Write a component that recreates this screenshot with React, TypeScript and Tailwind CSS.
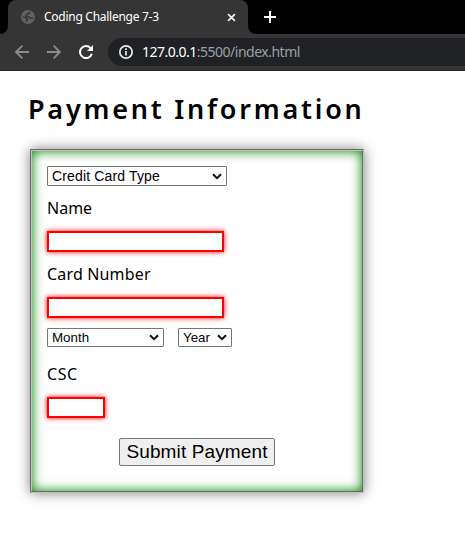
import React from 'react';

const errorField =
  'block h-[21px] border-2 border-[#ff0000] bg-white shadow-[0_0_5px_#ff0000] outline-none';

function Globe() {
  return (
    <svg width="14" height="14" viewBox="0 0 14 14" className="shrink-0">
      <circle cx="7" cy="7" r="7" fill="#5f6368" />
      <path d="M8.9 1.8c0 1.5-.8 1.6-2 1.8 0 1.1-.7 1.4-1.8 1.5l.2 1.3h2.1c1.1 0 .9 1.8 2 1.8h2.8M1.7 7.2l2.7.3c1 .2 1.2 1.6 2.2 1.7-.1 1.2-1.3 1-1.3 2.6" fill="none" stroke="#353535" strokeWidth="1.5" />
    </svg>
  );
}

function Browser() {
  return (
    <header className="font-['Noto_Sans','Open_Sans',sans-serif]">
      <div className="flex h-[34px] bg-black">
        <div className="flex w-2 items-end bg-[#353535]">
          <div className="h-full w-full rounded-br-[8px] bg-black" />
        </div>
        <div className="bg-black">
          <div className="flex h-[34px] w-[240px] items-center rounded-t-[8px] bg-[#353535] pl-[13px] pr-[12px]">
            <Globe />
            <span className="ml-[9px] whitespace-nowrap text-[12px] leading-4 tracking-[-0.27px] text-white">Coding Challenge 7-3</span>
            <svg width="9" height="9" viewBox="0 0 10 10" className="ml-auto" stroke="#f1f1f1" strokeWidth="1.9">
              <path d="M1.2 1.2l7.6 7.6M8.8 1.2L1.2 8.8" />
            </svg>
          </div>
        </div>
        <div className="flex flex-1 bg-[#353535]">
          <div className="flex flex-1 items-center rounded-bl-[8px] bg-black pl-4">
            <svg width="12" height="12" viewBox="0 0 12 12" stroke="#fff" strokeWidth="2">
              <path d="M0 6h12M6 0v12" />
            </svg>
          </div>
        </div>
      </div>
      <div className="flex h-[37px] items-center border-b border-[#252628] bg-[#353535] pl-[15px]">
        <svg width="14" height="14" viewBox="0 0 14 14" fill="none" stroke="#8b8b8b" strokeWidth="1.8">
          <path d="M14 7H1.5M7.4 .7L1.1 7l6.3 6.3" />
        </svg>
        <svg width="14" height="14" viewBox="0 0 14 14" fill="none" stroke="#8b8b8b" strokeWidth="1.8" className="ml-[18px]">
          <path d="M0 7h12.5M6.6.7L12.9 7l-6.3 6.3" />
        </svg>
        <svg width="14" height="14" viewBox="0 0 14 14" fill="none" className="ml-[18px]">
          <path d="M11.6 3.2A6 6 0 1 0 12.8 8.7" stroke="#fff" strokeWidth="2" />
          <path d="M14 0v6H8z" fill="#fff" />
        </svg>
        <div className="ml-[15px] flex h-7 flex-1 items-center rounded-l-full bg-[#202124] pl-[11px]">
          <svg width="14" height="14" viewBox="0 0 14 14" fill="none" stroke="#e8eaed" strokeWidth="1.7">
            <circle cx="7" cy="7" r="6.15" />
            <path d="M7 6v4.5M7 3.3v1.6" />
          </svg>
          <span className="ml-[9px] whitespace-nowrap text-[14px] leading-5 tracking-[-0.5px] text-[#9aa0a6]">
            <span className="text-white">127.0.0.1</span>:5500/index.html
          </span>
        </div>
      </div>
    </header>
  );
}

function Select({ label, className }: { label: string; className: string }) {
  return (
    <button type="button" className={`flex items-center justify-between rounded-[1px] border border-[#767676] bg-white pl-1 pr-[4px] font-['Liberation_Sans',Arial,sans-serif] text-black ${className}`}>
      <span className="whitespace-nowrap">{label}</span>
      <svg width="10" height="7" viewBox="0 0 10 7" fill="none" stroke="#101010" strokeWidth="2">
        <path d="M1 1.2l4 4 4-4" />
      </svg>
    </button>
  );
}

export default function App() {
  return (
    <div className="h-[541px] w-[465px] overflow-hidden bg-white text-black">
      <Browser />
      <main className="pl-[30px] pt-[17px] font-['Noto_Sans',sans-serif]">
        <h1 className="-ml-[2px] h-[61px] whitespace-nowrap text-[27px] font-semibold leading-[42px] tracking-[2.77px]">Payment Information</h1>
        <form className="h-[344px] w-[334px] border-2 border-[rgb(192,192,192)] pl-[15px] pt-[15px] shadow-[0_0_12px_gray,inset_0_0_12px_green] [border-style:groove]">
          <Select label="Credit Card Type" className="h-5 w-[180px] text-[14px] tracking-[0.15px]" />
          <label className="mt-[10px] block h-[24px] text-[16px] leading-6">Name</label>
          <input className={`mt-[11px] w-[177px] ${errorField}`} />
          <label className="mt-[10px] block h-[24px] text-[16px] leading-6 tracking-[0.17px]">Card Number</label>
          <input className={`mt-[11px] w-[177px] ${errorField}`} />
          <div className="mt-[10px] flex gap-[14px]">
            <Select label="Month" className="h-[19px] w-[117px] text-[13.33px]" />
            <Select label="Year" className="h-[19px] w-[54px] text-[13.33px]" />
          </div>
          <label className="mt-[15px] block h-[24px] text-[16px] leading-6 tracking-[0.6px]">CSC</label>
          <input className={`mt-[11px] w-[58px] ${errorField}`} />
          <button type="button" className="ml-[72px] mt-5 block h-7 w-[156px] whitespace-nowrap rounded-[2px] border border-[#767676] bg-[#efefef] font-['Liberation_Sans',Arial,sans-serif] text-[19px] leading-[26px] tracking-[0.12px]">Submit Payment</button>
        </form>
      </main>
    </div>
  );
}
